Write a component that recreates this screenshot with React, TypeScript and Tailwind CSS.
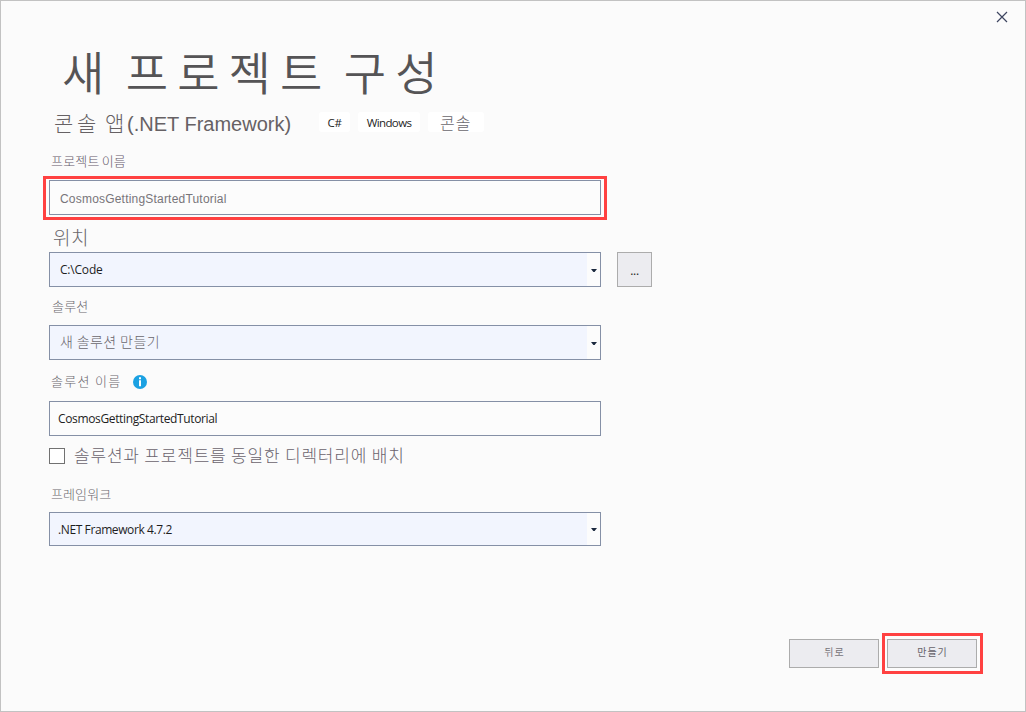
import type { ReactNode } from "react";

const KR = "font-['Noto_Sans_CJK_KR',sans-serif] whitespace-nowrap";
const UI = "font-['Open_Sans','Noto_Sans_CJK_KR',sans-serif] whitespace-nowrap";
const ARIAL = "font-['Liberation_Sans','Noto_Sans_CJK_KR',sans-serif] whitespace-nowrap";

function Select({ children, className }: { children: ReactNode; className: string }) {
  return (
    <div className={`flex w-[552px] border border-[#8590a6] bg-[#f2f5fe] ${className}`}>
      <div className="flex flex-1 items-center">{children}</div>
      <div className="flex w-[13px] items-center justify-center bg-[#fcfcfc]">
        <svg width="6" height="3" viewBox="0 0 6 3" className="ml-px mt-px">
          <path d="M0 0h6L3.6 3H2.4z" fill="#1b293e" />
        </svg>
      </div>
    </div>
  );
}

export default function App() {
  return (
    <div className="flex h-[712px] w-[1026px] flex-col overflow-hidden border border-[#c2c2c2] bg-[#fbfbfb] pl-12 leading-none">
      <header className="flex h-[103px] justify-between">
        <h1 className={`${KR} ml-[13px] mt-[45px] text-[46px] font-[350] leading-[48px] tracking-[9.1px] text-[#555456] [word-spacing:-7px]`}>
          새 프로젝트 구성
        </h1>
        <button aria-label="닫기" className="mr-[17px] mt-[10px] h-3 w-3">
          <svg width="12" height="12" viewBox="0 0 12 12">
            <path d="M1 1l10 10M11 1L1 11" stroke="#3d4560" strokeWidth="1.2" />
          </svg>
        </button>
      </header>

      <div className="flex h-[38px] items-center text-[#666164]">
        <div className="flex w-[270px] items-center pl-[5px]">
          <span className={`${KR} -mt-[2px] text-[21px] font-light tracking-[3.6px] [word-spacing:-3px]`}>콘솔 앱</span>
          <span className={`${ARIAL} -ml-px mt-[2px] text-[20px]`}>(.NET Framework)</span>
        </div>
        <div className="-mt-[2px] flex gap-2">
          <span className={`${UI} flex h-5 w-[31px] items-center justify-center rounded-[3px] bg-white pt-[2px] text-[11.5px] tracking-[-0.4px] text-[#1e1e1e]`}>C#</span>
          <span className={`${UI} flex h-5 w-[62px] items-center justify-center rounded-[3px] bg-white pt-[2px] text-[11.5px] tracking-[-0.6px] text-[#1e1e1e]`}>Windows</span>
          <span className={`${KR} flex h-5 w-14 items-center rounded-[3px] bg-white pl-3 text-[16px] font-light tracking-[1px] text-[#6a676d]`}>콘솔</span>
        </div>
      </div>

      <label className={`${KR} flex h-[34px] items-center pl-[2px] pt-[2px] text-[13px] font-light tracking-[0.2px] text-[#65596a] [word-spacing:-1px]`}>
        프로젝트 이름
      </label>

      <div className="-ml-[6px] h-11 w-[564px] shrink-0 border-[3px] border-[#ff4141] bg-[#fcfcfc] pl-[3px] pt-px">
        <div className={`${ARIAL} flex h-[35px] w-[552px] items-center border border-[#8590a6] pl-[10px] pt-[2px] text-[12px] tracking-[0.2px] text-[#78757a]`}>
          CosmosGettingStartedTutorial
        </div>
      </div>

      <label className={`${KR} flex h-8 items-center pl-[4px] text-[19px] font-light tracking-[0.6px] text-[#6a676d]`}>위치</label>

      <div className="flex gap-4">
        <Select className="h-[35px]">
          <span className={`${UI} pl-[10px] text-[12px] tracking-[-0.2px] text-[#1e1e1e]`}>C:\Code</span>
        </Select>
        <button className={`${UI} h-[35px] w-[35px] border border-[#acacac] bg-[#ececf0] pt-[3px] text-[12px] tracking-[-0.3px] text-[#1e1e1e]`}>...</button>
      </div>

      <label className={`${KR} flex h-[38px] items-center pb-px pl-[3px] text-[13px] font-light tracking-[0.2px] text-[#6a676d]`}>솔루션</label>

      <Select className="h-[35px]">
        <span className={`${KR} -mt-[4px] pl-[10px] text-[14px] font-light tracking-[0.4px] text-[#6a676d]`}>새 솔루션 만들기</span>
      </Select>

      <div className="flex h-[41px] items-center pt-[3px]">
        <label className={`${KR} -mt-[3px] w-[84px] pl-[2px] text-[13px] font-light tracking-[1.3px] text-[#6a676d]`}>솔루션 이름</label>
        <svg width="14" height="14" viewBox="0 0 14 14">
          <circle cx="7" cy="7" r="7" fill="#1ba1e2" />
          <path d="M6 2.3h2v2H6zM6 5.3h2v6H6z" fill="#fff" />
        </svg>
      </div>

      <div className={`${UI} flex h-[35px] w-[552px] items-center border border-[#8590a6] bg-[#fcfcfc] pl-2 pt-px text-[12px] tracking-[-0.36px] text-[#1e1e1e]`}>
        CosmosGettingStartedTutorial
      </div>

      <label className="flex h-10 items-center gap-[9px]">
        <span className="h-4 w-4 border border-[#717171] bg-white" />
        <span className={`${KR} -mt-[4px] text-[17px] font-light tracking-[0.8px] text-[#6a636d]`}>솔루션과 프로젝트를 동일한 디렉터리에 배치</span>
      </label>

      <label className={`${KR} flex h-9 items-center pb-px pl-[2px] text-[13px] font-light tracking-[0.1px] text-[#6a676d]`}>프레임워크</label>

      <Select className="h-[34px]">
        <span className={`${UI} pl-2 pt-[2px] text-[12px] tracking-[-0.4px] text-[#1e1e1e]`}>.NET Framework 4.7.2</span>
      </Select>

      <footer className="mt-[87px] flex justify-end gap-[3px] pr-[42px]">
        <button className={`${KR} mt-[6px] h-[29px] w-[90px] border border-[#acacac] bg-[#ececf0] pb-1 pl-px text-[10px] tracking-[1px] text-[#77747a]`}>뒤로</button>
        <div className="h-[41px] w-[101px] border-[3px] border-[#ff4141] bg-[#fcfcfc] pl-[2px] pt-[3px]">
          <button className={`${KR} block h-[29px] w-[90px] border border-[#acacac] bg-[#ececf0] pb-[3px] pl-px text-[10px] tracking-[1px] text-[#66636a]`}>만들기</button>
        </div>
      </footer>
    </div>
  );
}
